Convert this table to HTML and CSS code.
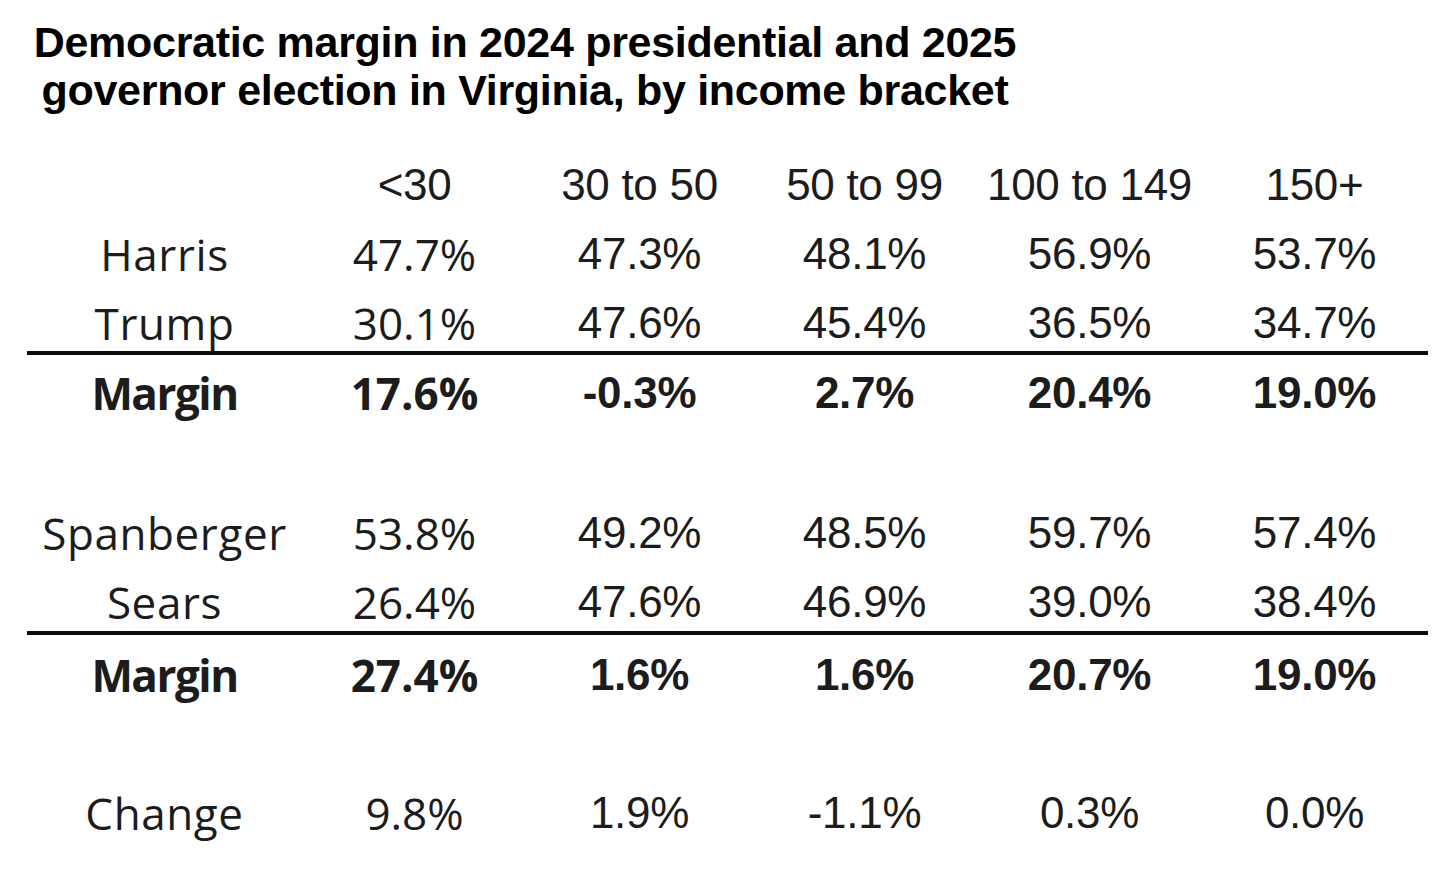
FILE: index.html
```html
<!DOCTYPE html>
<html lang="en">
<head>
<meta charset="utf-8">
<title>Democratic margin by income bracket</title>
<link rel="stylesheet" href="styles.css">
</head>
<body>
<main class="page">
  <h1 class="title">Democratic margin in 2024 presidential and 2025<br>governor election in Virginia, by income bracket</h1>
  <section class="table">
    <div class="row head">
      <span class="label"></span>
      <span class="num">&lt;30</span>
      <span class="num">30 to 50</span>
      <span class="num">50 to 99</span>
      <span class="num">100 to 149</span>
      <span class="num">150+</span>
    </div>
    <div class="row cand">
      <span class="label">Harris</span>
      <span class="num first">47.7%</span>
      <span class="num">47.3%</span>
      <span class="num">48.1%</span>
      <span class="num">56.9%</span>
      <span class="num">53.7%</span>
    </div>
    <div class="row cand">
      <span class="label">Trump</span>
      <span class="num first">30.1%</span>
      <span class="num">47.6%</span>
      <span class="num">45.4%</span>
      <span class="num">36.5%</span>
      <span class="num">34.7%</span>
    </div>
    <div class="row margin">
      <span class="label">Margin</span>
      <span class="num first">17.6%</span>
      <span class="num">-0.3%</span>
      <span class="num">2.7%</span>
      <span class="num">20.4%</span>
      <span class="num">19.0%</span>
    </div>
    <div class="row cand group">
      <span class="label">Spanberger</span>
      <span class="num first">53.8%</span>
      <span class="num">49.2%</span>
      <span class="num">48.5%</span>
      <span class="num">59.7%</span>
      <span class="num">57.4%</span>
    </div>
    <div class="row cand">
      <span class="label">Sears</span>
      <span class="num first">26.4%</span>
      <span class="num">47.6%</span>
      <span class="num">46.9%</span>
      <span class="num">39.0%</span>
      <span class="num">38.4%</span>
    </div>
    <div class="row margin second">
      <span class="label">Margin</span>
      <span class="num first">27.4%</span>
      <span class="num">1.6%</span>
      <span class="num">1.6%</span>
      <span class="num">20.7%</span>
      <span class="num">19.0%</span>
    </div>
    <div class="row change">
      <span class="label">Change</span>
      <span class="num first">9.8%</span>
      <span class="num">1.9%</span>
      <span class="num">-1.1%</span>
      <span class="num">0.3%</span>
      <span class="num">0.0%</span>
    </div>
  </section>
</main>
</body>
</html>
```
FILE: styles.css
```css
html, body {
  margin: 0;
  padding: 0;
  background: #ffffff;
}

.page {
  width: 1456px;
  height: 876px;
  overflow: hidden;
}

.title {
  margin: 18px 0 0 0;
  width: 1050px;
  text-align: center;
  font-family: "Liberation Sans", Arial, sans-serif;
  font-weight: 700;
  font-size: 43px;
  line-height: 48px;
  letter-spacing: -0.3px;
  color: #000;
}

.table {
  margin: 49px 0 0 27px;
  width: 1401px;
  color: #1c1c1c;
}

.row {
  display: grid;
  grid-template-columns: 275px repeat(5, 225px);
  align-items: center;
  height: 44px;
  text-align: center;
}

.row + .row {
  margin-top: 25px;
}

.label {
  font-family: "Open Sans", "Noto Sans", sans-serif;
  font-size: 44px;
  line-height: 1;
  letter-spacing: 0.6px;
}

.num {
  font-family: "Liberation Sans", Arial, sans-serif;
  font-size: 44px;
  line-height: 1;
  letter-spacing: -0.3px;
}

.num.first {
  font-family: "Open Sans", "Noto Sans", sans-serif;
  letter-spacing: 0;
}

.row.margin {
  border-top: 4px solid #0a0a0a;
  height: 44px;
  padding-top: 16px;
  margin-top: 6px;
}

.row.margin.second {
  margin-top: 7px;
  padding-top: 18px;
}

.row.margin .label,
.row.margin .num {
  font-weight: 700;
}

.row.margin .label {
  letter-spacing: -1.5px;
}

.row.group {
  margin-top: 96px;
}

.row.change {
  margin-top: 94px;
}
```
